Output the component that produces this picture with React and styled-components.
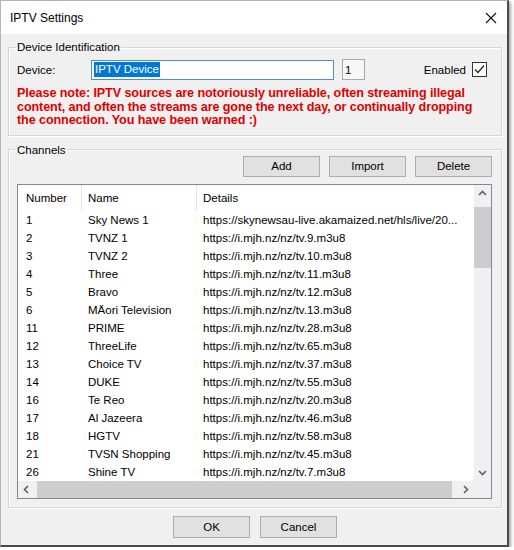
import React from 'react';
import styled, { createGlobalStyle } from 'styled-components';

const GlobalStyle = createGlobalStyle`
  body {
    margin: 0;
    background: #ffffff;
    font-family: "Liberation Sans", Arial, sans-serif;
  }
`;

const channels = [
  ['1', 'Sky News 1', 'https://skynewsau-live.akamaized.net/hls/live/20...'],
  ['2', 'TVNZ 1', 'https://i.mjh.nz/nz/tv.9.m3u8'],
  ['3', 'TVNZ 2', 'https://i.mjh.nz/nz/tv.10.m3u8'],
  ['4', 'Three', 'https://i.mjh.nz/nz/tv.11.m3u8'],
  ['5', 'Bravo', 'https://i.mjh.nz/nz/tv.12.m3u8'],
  ['6', 'MÄori Television', 'https://i.mjh.nz/nz/tv.13.m3u8'],
  ['11', 'PRIME', 'https://i.mjh.nz/nz/tv.28.m3u8'],
  ['12', 'ThreeLife', 'https://i.mjh.nz/nz/tv.65.m3u8'],
  ['13', 'Choice TV', 'https://i.mjh.nz/nz/tv.37.m3u8'],
  ['14', 'DUKE', 'https://i.mjh.nz/nz/tv.55.m3u8'],
  ['16', 'Te Reo', 'https://i.mjh.nz/nz/tv.20.m3u8'],
  ['17', 'Al Jazeera', 'https://i.mjh.nz/nz/tv.46.m3u8'],
  ['18', 'HGTV', 'https://i.mjh.nz/nz/tv.58.m3u8'],
  ['21', 'TVSN Shopping', 'https://i.mjh.nz/nz/tv.45.m3u8'],
  ['26', 'Shine TV', 'https://i.mjh.nz/nz/tv.7.m3u8'],
];

const Window = styled.div`
  width: 506px;
  height: 544px;
  border: 1px solid #b4b4b4;
  border-right: 2px solid #4a4a4a;
  border-bottom: 2px solid #4a4a4a;
  background: #f0f0f0;
  box-shadow: 2px 2px 3px rgba(0, 0, 0, 0.35);
  display: flex;
  flex-direction: column;
`;

const TitleBar = styled.div`
  height: 33px;
  background: #ffffff;
  display: flex;
  align-items: center;
  justify-content: space-between;
  padding: 0 10px 0 9px;
  flex-shrink: 0;
`;

const Title = styled.span`
  font-size: 12px;
  color: #000;
`;

const Close = styled.svg`
  width: 12px;
  height: 12px;
`;

const Body = styled.div`
  flex: 1;
  display: flex;
  flex-direction: column;
  padding: 7px 5px 0 7px;
`;

const Group = styled.fieldset`
  margin: ${({ $top }) => $top || 0}px 0 0;
  border: 1px solid #d6d6d6;
  box-shadow: inset 1px 1px 0 #ffffff, 1px 1px 0 #ffffff;
  padding: ${({ $pad }) => $pad};
  min-width: 0;
`;

const Legend = styled.legend`
  font-size: 11.5px;
  color: #000;
  padding: 0 1px;
  margin-left: -1px;
`;

const DeviceRow = styled.div`
  display: flex;
  align-items: center;
  height: 21px;
`;

const Label = styled.span`
  font-size: 11.5px;
  width: 74px;
`;

const TextBox = styled.div`
  width: 239px;
  height: 18px;
  border: 1px solid #4a8fd0;
  background: #ffffff;
  display: flex;
  align-items: center;
  padding-left: 2px;
`;

const Selected = styled.span`
  background: #0078d7;
  color: #ffffff;
  font-size: 11.5px;
  line-height: 15px;
  padding: 0 1px;
`;

const NumberBox = styled.div`
  width: 19px;
  height: 19px;
  margin-left: 8px;
  border: 1px solid #a8a8a8;
  background: #f7f7f7;
  font-size: 11.5px;
  display: flex;
  align-items: center;
  padding-left: 2px;
  box-sizing: content-box;
`;

const EnabledWrap = styled.label`
  margin-left: auto;
  margin-right: 6px;
  display: flex;
  align-items: center;
  gap: 6px;
  font-size: 11.5px;
`;

const CheckBox = styled.span`
  width: 13px;
  height: 13px;
  border: 1px solid #333333;
  background: #ffffff;
  display: flex;
  align-items: center;
  justify-content: center;
`;

const Warning = styled.p`
  margin: 7px 0 0;
  color: #e00000;
  font-weight: bold;
  font-size: 12.6px;
  line-height: 13.6px;
  letter-spacing: -0.1px;
  white-space: nowrap;
`;

const ButtonRow = styled.div`
  display: flex;
  justify-content: ${({ $align }) => $align};
  gap: ${({ $gap }) => $gap}px;
`;

const Button = styled.button`
  width: 77px;
  height: ${({ $h }) => $h || 21}px;
  background: #e1e1e1;
  border: 1px solid #adadad;
  font-family: "Liberation Sans", Arial, sans-serif;
  font-size: 11.5px;
  color: #000;
  padding: 0;
`;

const List = styled.div`
  margin-top: 7px;
  height: 313px;
  border: 1px solid #828790;
  background: #ffffff;
  display: grid;
  grid-template-columns: 1fr 17px;
  grid-template-rows: 1fr 17px;
  overflow: hidden;
`;

const Content = styled.div`
  overflow: hidden;
  font-size: 11.5px;
`;

const Row = styled.div`
  display: grid;
  grid-template-columns: 64px 115px 280px;
  height: ${({ $head }) => ($head ? 26 : 18)}px;
  align-items: center;
  white-space: nowrap;
`;

const Cell = styled.div`
  padding-left: ${({ $pad }) => $pad}px;
  height: 100%;
  display: flex;
  align-items: center;
  border-right: ${({ $sep }) => ($sep ? '1px solid #e5e5e5' : 'none')};
  box-sizing: border-box;
`;

const VScroll = styled.div`
  background: #f0f0f0;
  display: flex;
  flex-direction: column;
  align-items: center;
`;

const HScroll = styled.div`
  background: #f0f0f0;
  display: flex;
  align-items: center;
`;

const Arrow = styled.div`
  width: 17px;
  height: 17px;
  display: flex;
  align-items: center;
  justify-content: center;
  flex-shrink: 0;
`;

const VThumb = styled.div`
  width: 17px;
  height: 61px;
  margin-top: 5px;
  background: #cdcdcd;
`;

const VSpacer = styled.div`
  flex: 1;
`;

const HThumb = styled.div`
  flex: 1;
  height: 17px;
  margin: 0 5px 0 2px;
  background: #cdcdcd;
`;

const Corner = styled.div`
  background: #f0f0f0;
`;

const Footer = styled.div`
  display: flex;
  justify-content: center;
  gap: 10px;
  padding: 8px 0 0;
`;

const Chevron = ({ dir }) => {
  const pts = {
    up: '1,6 4.5,2.5 8,6',
    down: '1,3 4.5,6.5 8,3',
    left: '6,1 2.5,4.5 6,8',
    right: '3,1 6.5,4.5 3,8',
  }[dir];
  return (
    <svg width="9" height="9" viewBox="0 0 9 9">
      <polyline points={pts} fill="none" stroke="#606060" strokeWidth="1.6" />
    </svg>
  );
};

export default function App() {
  return (
    <>
      <GlobalStyle />
      <Window>
        <TitleBar>
          <Title>IPTV Settings</Title>
          <Close viewBox="0 0 12 12">
            <path d="M1 1 L11 11 M11 1 L1 11" stroke="#111" strokeWidth="1.1" />
          </Close>
        </TitleBar>
        <Body>
          <Group $pad="6px 8px 7px 8px">
            <Legend>Device Identification</Legend>
            <DeviceRow>
              <Label>Device:</Label>
              <TextBox>
                <Selected>IPTV Device</Selected>
              </TextBox>
              <NumberBox>1</NumberBox>
              <EnabledWrap>
                Enabled
                <CheckBox>
                  <svg width="11" height="11" viewBox="0 0 11 11">
                    <polyline points="1,5.5 4,8.5 10,1.5" fill="none" stroke="#222" strokeWidth="1.2" />
                  </svg>
                </CheckBox>
              </EnabledWrap>
            </DeviceRow>
            <Warning>
              Please note: IPTV sources are notoriously unreliable, often streaming illegal
              <br />
              content, and often the streams are gone the next day, or continually dropping
              <br />
              the connection. You have been warned :)
            </Warning>
          </Group>
          <Group $pad="0 9px 8px 8px" $top={8}>
            <Legend>Channels</Legend>
            <ButtonRow $align="flex-end" $gap={9}>
              <Button>Add</Button>
              <Button>Import</Button>
              <Button>Delete</Button>
            </ButtonRow>
            <List>
              <Content>
                <Row $head>
                  <Cell $pad={8} $sep>Number</Cell>
                  <Cell $pad={6} $sep>Name</Cell>
                  <Cell $pad={6}>Details</Cell>
                </Row>
                {channels.map(([num, name, url]) => (
                  <Row key={num}>
                    <Cell $pad={8}>{num}</Cell>
                    <Cell $pad={6}>{name}</Cell>
                    <Cell $pad={6}>{url}</Cell>
                  </Row>
                ))}
              </Content>
              <VScroll>
                <Arrow><Chevron dir="up" /></Arrow>
                <VThumb />
                <VSpacer />
                <Arrow><Chevron dir="down" /></Arrow>
              </VScroll>
              <HScroll>
                <Arrow><Chevron dir="left" /></Arrow>
                <HThumb />
                <Arrow><Chevron dir="right" /></Arrow>
              </HScroll>
              <Corner />
            </List>
          </Group>
          <Footer>
            <Button $h={22}>OK</Button>
            <Button $h={22}>Cancel</Button>
          </Footer>
        </Body>
      </Window>
    </>
  );
}
